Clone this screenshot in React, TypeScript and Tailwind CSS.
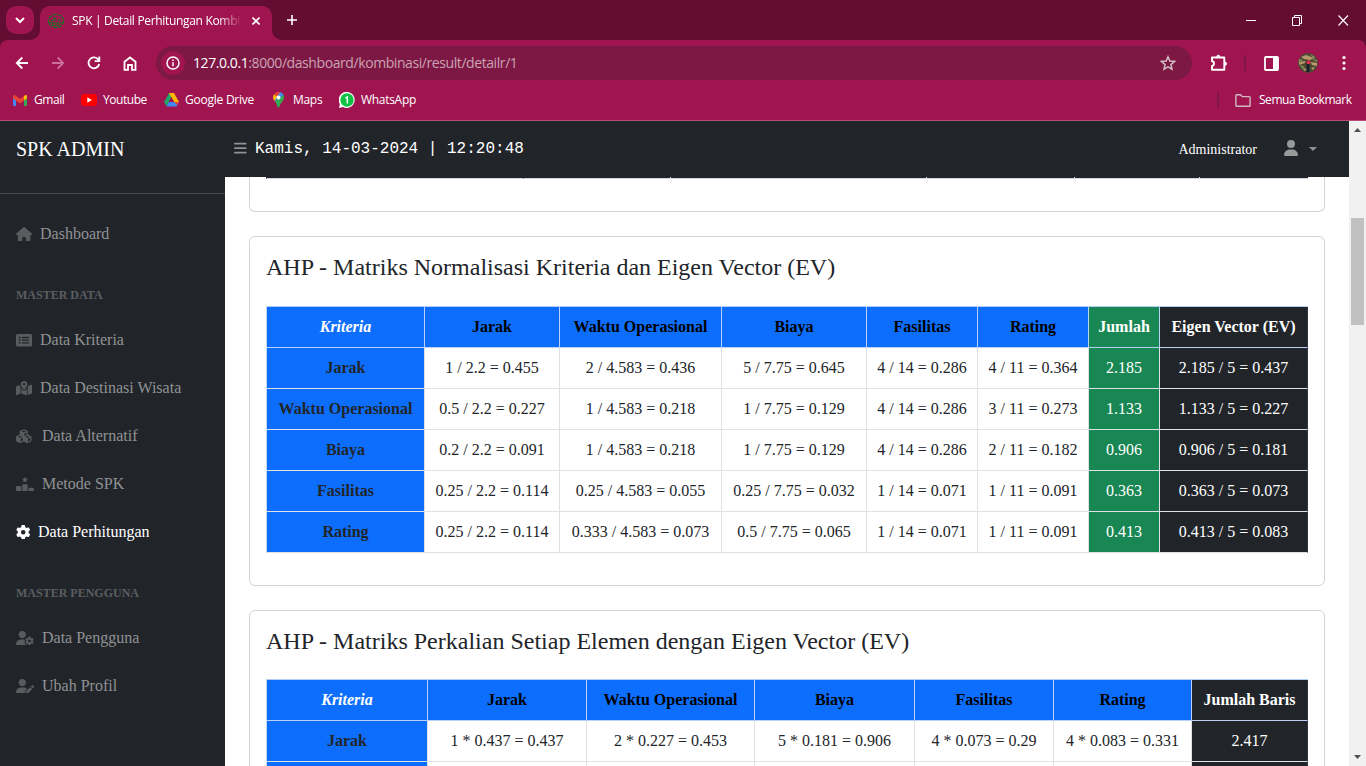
import type { ReactNode } from "react";
import {
  FaHouse, FaRectangleList, FaMapLocationDot, FaCubes, FaRankingStar, FaGear,
  FaUserGear, FaUserPen, FaBars, FaUser,
} from "react-icons/fa6";

const ui = "font-['Open_Sans','Noto_Sans',sans-serif]";

/* ---------- Browser chrome ---------- */

function TabStrip() {
  return (
    <div className="flex h-[40px] shrink-0 bg-[#640d33]">
      <div className="ml-[6px] mt-[6px] flex size-[28px] items-center justify-center rounded-[10px] bg-[#a0154f]">
        <svg width="10" height="7" viewBox="0 0 10 7" fill="none" stroke="#fff" strokeWidth="2"><path d="M1 1l4 4 4-4" /></svg>
      </div>
      <div className="flex items-end">
        <svg width="10" height="10" viewBox="0 0 10 10" className="-ml-[4px]"><path d="M10 0v10H0A10 10 0 0 0 10 0z" fill="#a0154f" /></svg>
      </div>
      <div className="mt-[6px] flex h-[34px] w-[232px] items-center rounded-t-[10px] bg-[#a0154f] pb-[5px]">
        <svg width="18" height="18" viewBox="0 0 18 18" fill="none" stroke="#1c7224" className="ml-[7px]">
          <ellipse cx="9" cy="9" rx="7.6" ry="6.6" strokeWidth="1.2" strokeDasharray="4 1" />
          <path d="M2 11h14M4 8.5h3M8.500 5.500v3M11 8h3M5 13l8 .5M6 6.500h2" strokeWidth="1.500" strokeDasharray="2 .6" />
        </svg>
        <span className="ml-[7px] w-[170px] overflow-hidden whitespace-nowrap text-[12px] tracking-[-0.320px] text-white [mask-image:linear-gradient(to_right,black_147px,transparent_170px)]">
          SPK | Detail Perhitungan Kombinasi
        </span>
        <svg width="8" height="8" viewBox="0 0 8 8" stroke="#fff" strokeWidth="1.6" className="ml-[10px]"><path d="M.5 .5l7 7M7.500 .5l-7 7" /></svg>
      </div>
      <div className="flex items-end">
        <svg width="10" height="10" viewBox="0 0 10 10"><path d="M0 0v10h10A10 10 0 0 1 0 0z" fill="#a0154f" /></svg>
      </div>
      <div className="ml-[5px] flex items-center">
        <svg width="10" height="10" viewBox="0 0 10 10" stroke="#fff" strokeWidth="1.6"><path d="M5 0v10M0 5h10" /></svg>
      </div>
      <div className="ml-auto mr-[17px] flex items-center gap-[35px]">
        <svg width="11" height="11" viewBox="0 0 11 11" stroke="#fff"><path d="M0 5.500h10" /></svg>
        <svg width="11" height="11" viewBox="0 0 11 11" fill="none" stroke="#fff"><path d="M.5 2.500h7v8h-7zM2.500 2.500v-2h7v8h-2" /></svg>
        <svg width="11" height="11" viewBox="0 0 11 11" stroke="#fff" strokeWidth="1.100" fill="none"><path d="M.5 .5l9.500 10M10 .5l-9.500 10" /></svg>
      </div>
    </div>
  );
}

function Toolbar() {
  return (
    <div className="flex h-[46px] items-center rounded-t-[8px] bg-[#a0154f]">
      <svg width="14" height="14" viewBox="0 0 14 14" fill="none" stroke="#fff" strokeWidth="1.800" className="ml-[15px]"><path d="M13 7H2M7.300 1.500L1.800 7l5.500 5.500" /></svg>
      <svg width="14" height="14" viewBox="0 0 14 14" fill="none" stroke="#c9719a" strokeWidth="1.800" className="ml-[22px]"><path d="M1 7h11M6.700 1.500L12.200 7l-5.500 5.500" /></svg>
      <svg width="14" height="14" viewBox="0 0 14 14" fill="none" stroke="#fff" strokeWidth="1.800" className="ml-[22px]"><path d="M12.200 8A5.400 5.400 0 1 1 10.900 3.200L12 4.400" /><path d="M12.300 .6v4.600H7.700" /></svg>
      <svg width="14" height="15" viewBox="0 0 14 15" fill="none" stroke="#fff" strokeWidth="1.800" className="ml-[22px]"><path d="M1.500 5.800L7 1.500l5.500 4.300v8H9V9H5v4.800H1.500z" /></svg>
      <div className="ml-[19px] flex h-[34px] w-[1036px] items-center rounded-full bg-[#7c1843] pl-[5px]">
        <span className="flex size-[24px] items-center justify-center rounded-full bg-[#a0154f]">
          <svg width="14" height="14" viewBox="0 0 14 14" fill="none" stroke="#fff" strokeWidth="1.500"><circle cx="7" cy="7" r="6" /><path d="M7 6.200v4M7 3.500v1.600" /></svg>
        </span>
        <span className="ml-[8px] pb-px text-[14px] tracking-[-0.420px] text-[#cba3b4]"><span className="text-white">127.0.0.1</span>:8000/dashboard/kombinasi/result/detailr/1</span>
        <svg width="16" height="16" viewBox="0 0 16 16" fill="none" stroke="#d0bcc5" strokeWidth="1.500" className="ml-auto mr-[16px]"><path d="M8 1.800l1.800 4.300 4.700.4-3.600 3.100 1.100 4.600L8 11.800l-4 2.400 1.100-4.600L1.500 6.500l4.700-.4z" /></svg>
      </div>
      <svg width="18" height="18" viewBox="0 0 18 18" fill="none" stroke="#fff" strokeWidth="1.900" strokeLinejoin="round" className="ml-[18px]"><path d="M2 3.500h12.300v12.300H2v-3.900c2.600 0 2.600-4.600 0-4.600z" /><path d="M6.600 2.800a1.700 1.700 0 0 1 3.400 0zM15 8a1.700 1.700 0 0 1 0 3.400z" fill="#fff" strokeWidth=".6" /></svg>
      <span className="ml-[16px] h-[16px] w-[2px] bg-[#7c1843]" />
      <svg width="15" height="15" viewBox="0 0 15 15" className="ml-[18px]"><rect x="1" y="1" width="13" height="13" rx=".8" fill="none" stroke="#fff" strokeWidth="1.800" /><path d="M9 1h5v13H9z" fill="#fff" /></svg>
      <svg width="20" height="20" viewBox="0 0 20 20" className="ml-[19px]">
        <defs><clipPath id="avatar"><circle cx="10" cy="10" r="10" /></clipPath></defs>
        <g clipPath="url(#avatar)">
          <path d="M0 0h20v20H0z" fill="#4c4a35" />
          <path d="M3 4l5-2 8 3-4 2-6-1zM1 9l6-1v2l-6 2zM13 9l6 1v3l-5-1zM4 15l5 1-2 2zM13 15l4-1-2 3z" fill="#b79a6c" />
          <path d="M0 6l5 1-4 2zM12 1l5 3-1 2zM2 12l5 2-3 1zM14 6l5 1v2z" fill="#87965d" />
          <path d="M8.500 8h3v11h-3z" fill="#1b202b" /><path d="M8 9l2.500-2L13 9l-1 2H9z" fill="#d9304f" />
        </g>
      </svg>
      <svg width="4" height="16" viewBox="0 0 4 16" fill="#fff" className="ml-[24px]"><circle cx="2" cy="2.500" r="1.600" /><circle cx="2" cy="8" r="1.600" /><circle cx="2" cy="13.500" r="1.600" /></svg>
    </div>
  );
}

function Bookmarks() {
  return (
    <div className="flex h-[34px] items-center bg-[#a0154f] pb-[6px] text-[12px] text-white">
      <svg width="14" height="11" viewBox="0 0 14 11" className="ml-[13px]">
        <path d="M0 1.500L3 3.800V11H1a1 1 0 0 1-1-1z" fill="#4285f4" /><path d="M14 1.500l-3 2.300V11h2a1 1 0 0 0 1-1z" fill="#34a853" />
        <path d="M11 1l1-.7c.8-.6 2 0 2 1.200v1.700l-3 2.300z" fill="#fbbc04" /><path d="M0 3.200V1.500C0 .3 1.200-.3 2 .3L7 4l4-3v4.500L7 8.500l-4-3z" fill="#ea4335" />
      </svg>
      <span className="ml-[7px] w-[31px] whitespace-nowrap tracking-[-0.450px]">Gmail</span>
      <svg width="16" height="12" viewBox="0 0 16 12" className="ml-[16px]"><rect width="16" height="12" rx="3" fill="#f00" /><path d="M6.300 3.300L10.800 6l-4.500 2.700z" fill="#fff" /></svg>
      <span className="ml-[6px] w-[44px] whitespace-nowrap tracking-[-0.450px]">Youtube</span>
      <svg width="15" height="14" viewBox="0 0 15 14" className="ml-[17px]">
        <path d="M5 0h5L7.500 4.300 2.400 13.300 0 9z" fill="#1fa463" /><path d="M5 0h5l5 9h-5z" fill="#ffba00" /><path d="M4.900 9H15l-2.400 4.500H2.400z" fill="#4285f4" />
        <path d="M7.500 4.300L4.900 9h5.200z" fill="#a0154f" /><path d="M10.100 9H15l-1.800 3.300z" fill="#ea4335" />
      </svg>
      <span className="ml-[6px] w-[70px] whitespace-nowrap tracking-[-0.240px]">Google Drive</span>
      <svg width="11" height="16" viewBox="0 0 11 16" className="ml-[18px]">
        <path d="M5.500 0C8.600 0 11 2.400 11 5.500c0 3.500-3.300 4.500-4.500 9.200-.3 1.200-1.700 1.200-2 0C3.900 12 2.800 10.500 1.600 9z" fill="#34a853" />
        <path d="M1.200 2.200l3 2.500L1.700 9C.6 7.700 0 6.800 0 5.500 0 4 .5 3 1.200 2.200z" fill="#fbbc04" />
        <path d="M1.200 2.200C2.700.3 5-.4 7.200.3L4.300 4.600z" fill="#ea4335" /><path d="M7.200.3c1.500.5 2.600 1.500 3.200 2.700L1.700 9.200 4 5z" fill="#4285f4" /><circle cx="5.500" cy="5.500" r="2" fill="#fff" />
      </svg>
      <span className="ml-[9px] w-[29px] whitespace-nowrap tracking-[-0.300px]">Maps</span>
      <svg width="16" height="16" viewBox="0 0 16 16" className="ml-[17px]"><path d="M0 16l.8-4A8 8 0 1 1 4 15z" fill="#fff" /><circle cx="8" cy="8" r="6.700" fill="#12c143" /><path d="M6.300 6.200L8.300 5v6.500" stroke="#fff" strokeWidth="1.400" fill="none" /></svg>
      <span className="ml-[6px] whitespace-nowrap tracking-[-0.300px]">WhatsApp</span>
      <span className="ml-auto h-[16px] w-[2px] bg-[#7c1843]" />
      <svg width="16" height="13" viewBox="0 0 16 13" fill="none" stroke="#cfb9c2" strokeWidth="1.400" className="ml-[16px]"><path d="M1.700.8h4l1.600 1.800h7q.8 0 .8.800v8q0 .8-.8.8H1.700q-.8 0-.8-.8V1.600q0-.8.8-.8z" /></svg>
      <span className="ml-[8px] mr-[14px] w-[93px] whitespace-nowrap tracking-[-0.460px]">Semua Bookmark</span>
    </div>
  );
}

/* ---------- Sidebar ---------- */

function NavItem({ icon, label, active = false, gap }: { icon: ReactNode; label: string; active?: boolean; gap: string }) {
  return (
    <div className={`flex h-[48px] items-center pl-4 text-[16px] ${active ? "text-white" : "text-[#909294]"}`}>
      <span className={`shrink-0 text-[14.400px] ${gap} ${active ? "text-white" : "text-[#595c5f]"}`}>{icon}</span>
      <span className="whitespace-nowrap">{label}</span>
    </div>
  );
}

function NavHeading({ children }: { children: ReactNode }) {
  return <div className="h-[58px] pl-4 pt-[28px] text-[12px] font-bold leading-[18px] text-[#5b5e61]">{children}</div>;
}

function Sidebar() {
  return (
    <aside className="flex w-[225px] shrink-0 flex-col bg-[#212529]">
      <div className="flex h-[73px] items-start border-b border-[#46494d] pl-4 pt-[13px] text-[20px] leading-[30px] text-white">SPK ADMIN</div>
      <nav className="flex flex-col pt-[16px]">
        <NavItem icon={<FaHouse className="w-[16.200px]" />} label="Dashboard" gap="w-[24px]" />
        <NavHeading>MASTER DATA</NavHeading>
        <NavItem icon={<FaRectangleList className="w-[16.200px]" />} label="Data Kriteria" gap="w-[24px]" />
        <NavItem icon={<FaMapLocationDot className="w-[16.200px]" />} label="Data Destinasi Wisata" gap="w-[24px]" />
        <NavItem icon={<FaCubes className="w-[15.500px]" />} label="Data Alternatif" gap="w-[26px]" />
        <NavItem icon={<FaRankingStar className="w-[18px]" />} label="Metode SPK" gap="w-[26px]" />
        <NavItem icon={<FaGear className="w-[14.400px]" />} label="Data Perhitungan" active gap="w-[22px]" />
        <NavHeading>MASTER PENGGUNA</NavHeading>
        <NavItem icon={<FaUserGear className="w-[18px]" />} label="Data Pengguna" gap="w-[26px]" />
        <NavItem icon={<FaUserPen className="w-[18px]" />} label="Ubah Profil" gap="w-[26px]" />
      </nav>
    </aside>
  );
}

/* ---------- Matrices ---------- */

type Tone = "blue" | "green" | "dark";
type Column = { label: string; width: string; tone: Tone };

const tones: Record<Tone, string> = {
  blue: "bg-[#0d6efd] text-black",
  green: "bg-[#198754] text-white",
  dark: "bg-[#212529] text-white",
};

const normColumns: Column[] = [
  { label: "Kriteria", width: "w-[158px]", tone: "blue" },
  { label: "Jarak", width: "w-[135px]", tone: "blue" },
  { label: "Waktu Operasional", width: "w-[162px]", tone: "blue" },
  { label: "Biaya", width: "w-[145px]", tone: "blue" },
  { label: "Fasilitas", width: "w-[111px]", tone: "blue" },
  { label: "Rating", width: "w-[111px]", tone: "blue" },
  { label: "Jumlah", width: "w-[71px]", tone: "green" },
  { label: "Eigen Vector (EV)", width: "w-[148px]", tone: "dark" },
];

const normRows = [
  ["Jarak", "1 / 2.2 = 0.455", "2 / 4.583 = 0.436", "5 / 7.75 = 0.645", "4 / 14 = 0.286", "4 / 11 = 0.364", "2.185", "2.185 / 5 = 0.437"],
  ["Waktu Operasional", "0.5 / 2.2 = 0.227", "1 / 4.583 = 0.218", "1 / 7.75 = 0.129", "4 / 14 = 0.286", "3 / 11 = 0.273", "1.133", "1.133 / 5 = 0.227"],
  ["Biaya", "0.2 / 2.2 = 0.091", "1 / 4.583 = 0.218", "1 / 7.75 = 0.129", "4 / 14 = 0.286", "2 / 11 = 0.182", "0.906", "0.906 / 5 = 0.181"],
  ["Fasilitas", "0.25 / 2.2 = 0.114", "0.25 / 4.583 = 0.055", "0.25 / 7.75 = 0.032", "1 / 14 = 0.071", "1 / 11 = 0.091", "0.363", "0.363 / 5 = 0.073"],
  ["Rating", "0.25 / 2.2 = 0.114", "0.333 / 4.583 = 0.073", "0.5 / 7.75 = 0.065", "1 / 14 = 0.071", "1 / 11 = 0.091", "0.413", "0.413 / 5 = 0.083"],
];

const productColumns: Column[] = [
  { label: "Kriteria", width: "w-[161px]", tone: "blue" },
  { label: "Jarak", width: "w-[159px]", tone: "blue" },
  { label: "Waktu Operasional", width: "w-[168px]", tone: "blue" },
  { label: "Biaya", width: "w-[160px]", tone: "blue" },
  { label: "Fasilitas", width: "w-[139px]", tone: "blue" },
  { label: "Rating", width: "w-[138px]", tone: "blue" },
  { label: "Jumlah Baris", width: "w-[116px]", tone: "dark" },
];

const productRows = [
  ["Jarak", "1 * 0.437 = 0.437", "2 * 0.227 = 0.453", "5 * 0.181 = 0.906", "4 * 0.073 = 0.29", "4 * 0.083 = 0.331", "2.417"],
  ["", "", "", "", "", "", ""],
];

function Matrix({ columns, rows }: { columns: Column[]; rows: string[][] }) {
  const last = columns.length - 1;
  return (
    <table className="w-[1042px] table-fixed border-separate border-spacing-0 border-l border-t border-l-[#c4d6f0] border-t-[#b3cdf6] text-center text-[16px] text-[#212529]">
      <thead>
        <tr className="h-[41px]">
          {columns.map((c, i) => (
            <th key={c.label} className={`border-b border-r border-b-[#b9d1f6] p-0 ${i === last ? "border-r-[#33373b]" : "border-r-[#b9d1f6]"} ${c.width} ${tones[c.tone]}`}>
              {i === 0 ? <em className="text-white">{c.label}</em> : c.label}
            </th>
          ))}
        </tr>
      </thead>
      <tbody>
        {rows.map((row) => (
          <tr key={row[0]} className="h-[41px]">
            {row.map((value, i) =>
              i === 0 ? (
                <th key={i} className="border-b border-r border-[#dee2e6] bg-[#0d6efd] p-0">{value}</th>
              ) : (
                <td key={i} className={`border-b border-r border-b-[#dee2e6] p-0 ${i === last ? "border-r-[#33373b]" : "border-r-[#dee2e6]"} ${columns[i].tone === "blue" ? "" : tones[columns[i].tone]}`}>{value}</td>
              ),
            )}
          </tr>
        ))}
      </tbody>
    </table>
  );
}

function Card({ title, size, children }: { title: string; size: string; children: ReactNode }) {
  return (
    <section className={`w-[1076px] shrink-0 rounded-[6px] border border-[#d2d3d4] px-[16px] ${size}`}>
      <h4 className="pt-[16px] text-[24px] leading-[29px] text-[#212529]">{title}</h4>
      {children}
    </section>
  );
}

function Content() {
  const previous = ["w-[147px]", "w-[256px]", "w-[148px]", "w-[125px]"];
  return (
    <main className="flex min-h-0 grow flex-col gap-[24px] overflow-hidden bg-white pl-[24px]">
      <section className="h-[35px] w-[1076px] shrink-0 rounded-b-[6px] border border-t-0 border-[#d2d3d4] px-[16px]">
        <div className="flex h-[2px] w-[1042px]">
          <span className="h-[2px] w-[258px] border-x border-b border-x-[#212529] border-b-[#d5d8db] bg-[#212529]" />
          {previous.map((w) => (
            <span key={w} className={`flex h-[2px] border-b border-[#d5d8db] ${w}`}>
              <span className="grow bg-[#212529]" />
              <span className="w-px bg-[#dee2e6]" />
            </span>
          ))}
          <span className="h-[2px] grow border-b border-[#d5d8db] bg-[#212529]" />
        </div>
      </section>
      <Card title="AHP - Matriks Normalisasi Kriteria dan Eigen Vector (EV)" size="h-[350px]">
        <div className="pt-[24px]"><Matrix columns={normColumns} rows={normRows} /></div>
      </Card>
      <Card title="AHP - Matriks Perkalian Setiap Elemen dengan Eigen Vector (EV)" size="h-[350px]">
        <div className="pt-[23px]"><Matrix columns={productColumns} rows={productRows} /></div>
      </Card>
    </main>
  );
}

export default function App() {
  return (
    <div className="flex h-[766px] w-[1366px] flex-col overflow-hidden bg-white font-['Liberation_Serif',serif]">
      <header className={`flex h-[121px] shrink-0 flex-col border-b border-[#b54b78] bg-[#640d33] ${ui}`}>
        <TabStrip />
        <Toolbar />
        <Bookmarks />
      </header>
      <div className="flex min-h-0 grow">
        <Sidebar />
        <div className="flex w-[1124px] shrink-0 flex-col">
          <div className="flex h-[56px] shrink-0 items-center bg-[#212529] text-white">
            <FaBars className="mb-[2px] ml-[9px] h-[14.400px] w-[12.600px] text-[#909294]" />
            <span className="ml-[8.400px] font-['Liberation_Mono',monospace] text-[16px]">Kamis, 14-03-2024 | 12:20:48</span>
            <span className="ml-auto text-[14px]">Administrator</span>
            <FaUser className="mb-[2px] ml-[27px] h-[16px] w-[14px] text-[#97999b]" />
            <span className="mb-[1px] ml-[11px] mr-[32px] border-x-[4px] border-t-[4px] border-x-transparent border-t-[#909294]" />
          </div>
          <Content />
        </div>
        <div className="flex w-[17px] shrink-0 flex-col items-center bg-[#f1f1f1]">
          <svg width="7" height="4" viewBox="0 0 7 4" className="mt-[7px] shrink-0"><path d="M0 4h7L3.500 0z" fill="#505050" /></svg>
          <div className="mt-[86px] h-[107px] w-[13px] bg-[#c1c1c1]" />
          <svg width="7" height="4" viewBox="0 0 7 4" className="mb-[7px] mt-auto"><path d="M0 0h7L3.500 4z" fill="#505050" /></svg>
        </div>
      </div>
    </div>
  );
}
